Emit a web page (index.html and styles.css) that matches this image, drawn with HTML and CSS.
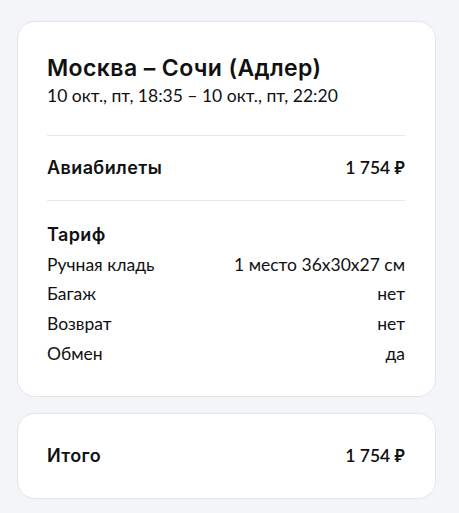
FILE: index.html
```html
<html>
  <head>
    <title>Заказ</title>
    <link rel="stylesheet" href="styles.css">
  </head>
  <body>
    <div class="card">
      <div class="route">
        <div class="route-title">Москва – Сочи (Адлер)</div>
        <div class="route-dates">10 окт., пт, 18:35 – 10 окт., пт, 22:20</div>
      </div>
      <div class="section">
        <div class="row row-main">
          <span class="label">Авиабилеты</span>
          <span class="price">1 754 ₽</span>
        </div>
      </div>
      <div class="section section-tariff">
        <div class="row row-main">
          <span class="label">Тариф</span>
        </div>
        <div class="row">
          <span>Ручная кладь</span>
          <span>1 место 36x30x27 см</span>
        </div>
        <div class="row">
          <span>Багаж</span>
          <span>нет</span>
        </div>
        <div class="row">
          <span>Возврат</span>
          <span>нет</span>
        </div>
        <div class="row">
          <span>Обмен</span>
          <span>да</span>
        </div>
      </div>
    </div>

    <div class="card card-total">
      <div class="row row-main">
        <span class="label">Итого</span>
        <span class="price">1 754 ₽</span>
      </div>
    </div>
  </body>
</html>
```

FILE: styles.css
```css
body {
  margin: 0;
  padding: 21px 23px 14px 17px;
  background-color: #f4f5f8;
  font: 17.5px/24px Lato, "Noto Sans", sans-serif;
  color: #111;
}
.card {
  background: #fff;
  border: 1px solid #e3e5ea;
  border-radius: 18px;
  padding: 30px 30px 30px 29px;
}
.card + .card {
  margin-top: 16px;
}
.route {
  padding-bottom: 27px;
}
.route-title {
  font-family: Inter, "Noto Sans", sans-serif;
  font-weight: 600;
  font-size: 23px;
  line-height: 32px;
  letter-spacing: 0.4px;
}
.route-dates {
  line-height: 24px;
}
.section {
  border-top: 1px solid #e6e8ec;
  padding: 20px 0;
}
.section-tariff {
  padding: 22px 0 0;
  display: flex;
  flex-direction: column;
  gap: 5.7px;
}
.row {
  display: flex;
  justify-content: space-between;
}
.row-main .label {
  font-family: Inter, "Noto Sans", sans-serif;
  font-weight: 600;
  font-size: 18px;
  letter-spacing: 0.4px;
}
.price {
  font-size: 17.5px;
  font-weight: 600;
}
```
